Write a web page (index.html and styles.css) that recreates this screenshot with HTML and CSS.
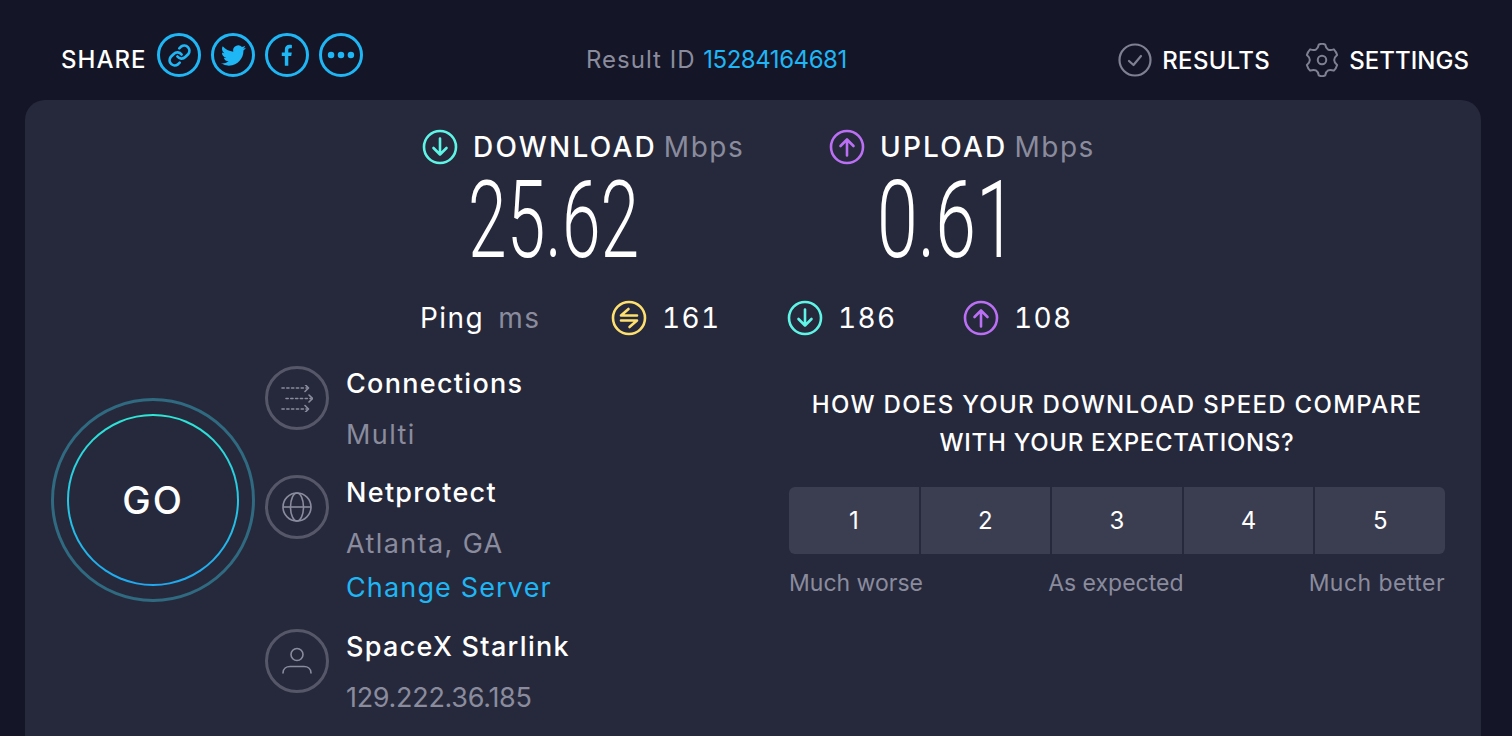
FILE: index.html
```html
<!DOCTYPE html>
<html lang="en">
<head>
  <meta charset="UTF-8">
  <meta name="viewport" content="width=device-width, initial-scale=1.0">
  <title>Speedtest Result</title>
  <link rel="stylesheet" href="styles.css">
</head>
<body>

  <header class="topbar">
    <div class="share">
      <span class="share-label">SHARE</span>
      <a class="share-btn">
        <svg viewBox="0 0 24 24" width="25" height="25" fill="none" stroke="#1fb6f5" stroke-width="2.6" stroke-linecap="round" stroke-linejoin="round"><path d="M10 13a5 5 0 0 0 7.5.5l3-3a5 5 0 0 0-7-7l-1.7 1.7"/><path d="M14 11a5 5 0 0 0-7.5-.5l-3 3a5 5 0 0 0 7 7l1.7-1.7"/></svg>
      </a>
      <a class="share-btn">
        <svg viewBox="0 0 24 24" width="25" height="25" fill="#1fb6f5"><path d="M23.953 4.57a10 10 0 01-2.825.775 4.958 4.958 0 002.163-2.723c-.951.555-2.005.959-3.127 1.184a4.92 4.92 0 00-8.384 4.482C7.69 8.095 4.067 6.13 1.64 3.162a4.822 4.822 0 00-.666 2.475c0 1.71.87 3.213 2.188 4.096a4.904 4.904 0 01-2.228-.616v.06a4.923 4.923 0 003.946 4.827 4.996 4.996 0 01-2.212.085 4.936 4.936 0 004.604 3.417 9.867 9.867 0 01-6.102 2.105c-.39 0-.779-.023-1.17-.067a13.995 13.995 0 007.557 2.209c9.053 0 13.998-7.496 13.998-13.985 0-.21 0-.42-.015-.63A9.935 9.935 0 0024 4.59z"/></svg>
      </a>
      <a class="share-btn">
        <svg viewBox="0 0 24 24" width="26" height="26" fill="#1fb6f5"><path d="M10 22v-9H7.2V9.6H10V7.2C10 4.2 11.7 2.6 14.3 2.6c.9 0 1.8.1 2.2.2v3h-1.6c-1.4 0-1.7.8-1.7 1.7v2.1h3.2l-.5 3.4h-2.7v9z"/></svg>
      </a>
      <a class="share-btn">
        <svg viewBox="0 0 24 24" width="34" height="34" fill="#1fb6f5"><circle cx="5" cy="12" r="2.3"/><circle cx="12" cy="12" r="2.3"/><circle cx="19" cy="12" r="2.3"/></svg>
      </a>
    </div>
    <div class="result-id"><span class="result-label">Result ID</span> <a class="link result-num">15284164681</a></div>
    <nav class="nav">
      <a class="nav-item">
        <svg viewBox="0 0 34 34" width="34" height="34" fill="none" stroke="#7f8193" stroke-width="2.2" stroke-linecap="round" stroke-linejoin="round"><circle cx="17" cy="17" r="15.5"/><path d="M11 18l4.5 4L23 13"/></svg>
        RESULTS
      </a>
      <a class="nav-item nav-settings">
        <svg viewBox="0 0 24 24" width="34" height="34" fill="none" stroke="#7f8193" stroke-width="1.4" stroke-linejoin="round"><circle cx="12" cy="12" r="3"/><path d="M9.7 1.2Q12 0 14.3 1.2Q15.25 6.37 20.38 4.5Q22.05 6.2 22.68 8.5Q18.5 12 22.68 15.5Q22.05 17.8 20.38 19.5Q15.25 17.63 14.3 22.8Q12 24 9.7 22.8Q8.75 17.63 3.62 19.5Q1.95 17.8 1.32 15.5Q5.5 12 1.32 8.5Q1.95 6.2 3.62 4.5Q8.75 6.37 9.7 1.2Z"/></svg>
        SETTINGS
      </a>
    </nav>
  </header>

  <main class="panel">
    <section class="speeds">
      <div class="speed speed-down">
        <div class="speed-head">
          <svg class="ico-36" viewBox="0 0 36 36" fill="none" stroke="#5ff5e6" stroke-width="2.6" stroke-linecap="round" stroke-linejoin="round"><circle cx="18" cy="18" r="16"/><path d="M18 9.5v16M11.5 19l6.5 6.5 6.5-6.5"/></svg>
          <span class="speed-name">DOWNLOAD</span> <span class="unit">Mbps</span>
        </div>
        <div class="speed-value">25.62</div>
      </div>
      <div class="speed">
        <div class="speed-head">
          <svg class="ico-36" viewBox="0 0 36 36" fill="none" stroke="#bb6ff5" stroke-width="2.6" stroke-linecap="round" stroke-linejoin="round"><circle cx="18" cy="18" r="16"/><path d="M18 26.5v-16M11.5 17l6.5-6.5 6.5 6.5"/></svg>
          <span class="speed-name">UPLOAD</span> <span class="unit">Mbps</span>
        </div>
        <div class="speed-value speed-value-up">0.61</div>
      </div>
    </section>

    <section class="ping">
      <div class="ping-label">Ping <span class="unit">ms</span></div>
      <div class="ping-stat">
        <svg class="ico-36" viewBox="0 0 36 36" fill="none" stroke="#fde06f" stroke-width="2.6" stroke-linecap="round" stroke-linejoin="round"><circle cx="18" cy="18" r="16"/><path d="M26 15.5H10l7.5-6.5M10 20.5h16l-7.5 6.5"/></svg>
        <span>161</span>
      </div>
      <div class="ping-stat">
        <svg class="ico-36" viewBox="0 0 36 36" fill="none" stroke="#5ff5e6" stroke-width="2.6" stroke-linecap="round" stroke-linejoin="round"><circle cx="18" cy="18" r="16"/><path d="M18 9.5v16M11.5 19l6.5 6.5 6.5-6.5"/></svg>
        <span>186</span>
      </div>
      <div class="ping-stat">
        <svg class="ico-36" viewBox="0 0 36 36" fill="none" stroke="#bb6ff5" stroke-width="2.6" stroke-linecap="round" stroke-linejoin="round"><circle cx="18" cy="18" r="16"/><path d="M18 26.5v-16M11.5 17l6.5-6.5 6.5 6.5"/></svg>
        <span>108</span>
      </div>
    </section>

    <section class="lower">
      <div class="go-ring">
        <div class="go-inner">GO</div>
      </div>

      <div class="info">
        <div class="info-row">
          <div class="info-ico">
            <svg viewBox="0 0 32 27" width="32" height="27" fill="none" stroke="#8a8c9e" stroke-width="1.6" stroke-linecap="round" stroke-linejoin="round"><path stroke-dasharray="2.2 2.6" d="M1 3h25M5 13.5h25M1 24h25"/><path d="M24 -.5l3.5 3.5-3.5 3.5M28 10l3.5 3.5-3.5 3.5M24 20.5l3.5 3.5-3.5 3.5"/></svg>
          </div>
          <div class="info-text">
            <div class="info-title">Connections</div>
            <div class="info-sub">Multi</div>
          </div>
        </div>
        <div class="info-row info-row-server">
          <div class="info-ico">
            <svg viewBox="0 0 30 30" width="30" height="30" fill="none" stroke="#8a8c9e" stroke-width="1.6"><circle cx="15" cy="15" r="14"/><ellipse cx="15" cy="15" rx="6.5" ry="14"/><path d="M1 15h28"/></svg>
          </div>
          <div class="info-text">
            <div class="info-title">Netprotect</div>
            <div class="info-sub">Atlanta, GA</div>
            <a class="change-server link">Change Server</a>
          </div>
        </div>
        <div class="info-row">
          <div class="info-ico">
            <svg viewBox="0 0 30 30" width="30" height="30" fill="none" stroke="#8a8c9e" stroke-width="1.6" stroke-linecap="round"><circle cx="15" cy="8.5" r="6"/><path d="M1 27c0-4.5 3.5-6.5 7-6.5h14c3.5 0 7 2 7 6.5"/></svg>
          </div>
          <div class="info-text">
            <div class="info-title">SpaceX Starlink</div>
            <div class="info-sub info-ip">129.222.36.185</div>
          </div>
        </div>
      </div>

      <div class="survey">
        <h2 class="survey-title">HOW DOES YOUR DOWNLOAD SPEED COMPARE<br><span class="survey-line">WITH YOUR EXPECTATIONS?</span></h2>
        <div class="scale">
          <button class="scale-btn">1</button>
          <button class="scale-btn">2</button>
          <button class="scale-btn">3</button>
          <button class="scale-btn">4</button>
          <button class="scale-btn">5</button>
        </div>
        <div class="scale-labels">
          <span>Much worse</span>
          <span>As expected</span>
          <span>Much better</span>
        </div>
      </div>
    </section>
  </main>

</body>
</html>
```

FILE: styles.css
```css
* {
  box-sizing: border-box;
}

html, body {
  height: 100%;
}

body {
  margin: 0;
  overflow: hidden;
  background: #141526;
  color: #fff;
  font-family: 'Inter', 'Liberation Sans', sans-serif;
}

.link {
  color: #1fb6f5;
}

.unit {
  color: #8a8c9e;
}

.ico-36 {
  width: 36px;
  height: 36px;
  flex: none;
}

/* Top bar */
.topbar {
  height: 100px;
  display: grid;
  grid-template-columns: 525px auto 1fr;
  align-items: center;
  padding: 10px 43px 0 61px;
}

.share {
  display: flex;
  align-items: center;
  gap: 10px;
}

.share-label {
  font-size: 24px;
  font-weight: 500;
  letter-spacing: 1px;
  margin: 8px 1px 0 0;
}

.share-btn {
  width: 44px;
  height: 44px;
  border: 3px solid #1fb6f5;
  border-radius: 50%;
  display: flex;
  align-items: center;
  justify-content: center;
}

.result-id {
  font-size: 24px;
  color: #8a8c9e;
  margin-top: 8px;
}

.result-label {
  letter-spacing: 1px;
  margin-right: 1px;
}

.result-num {
  letter-spacing: -.45px;
}

.nav {
  display: flex;
  justify-content: flex-end;
  gap: 35px;
  margin-top: 10px;
}

.nav-item {
  display: flex;
  align-items: center;
  gap: 10px;
  font-size: 24px;
  font-weight: 500;
  letter-spacing: .3px;
}

.nav-settings {
  letter-spacing: .05px;
}

/* Main panel */
.panel {
  margin: 0 31px 0 25px;
  height: 660px;
  background: #26293b;
  border-radius: 20px 20px 0 0;
  padding-top: 29px;
}

.speeds {
  display: flex;
  padding-left: 397px;
}

.speed-down {
  width: 407px;
}

.speed-head {
  display: flex;
  align-items: center;
  gap: 7px;
  font-size: 28px;
  font-weight: 500;
}

.speed-name {
  margin-left: 8px;
  letter-spacing: 2.2px;
}

.speed-head .unit {
  font-weight: 400;
  letter-spacing: 1.5px;
}

.speed-value {
  font-family: 'Roboto', sans-serif;
  font-size: 108px;
  font-weight: 300;
  line-height: 92px;
  margin: 9px 0 0 46px;
  transform: scaleX(.645);
  transform-origin: left center;
}

.speed-value-up {
  margin-left: 48px;
  transform: scaleX(.68);
}

/* Ping row */
.ping {
  display: flex;
  align-items: center;
  margin-top: 34px;
  padding-left: 395px;
  font-size: 28px;
}

.ping-label {
  width: 191px;
  letter-spacing: 1.4px;
}

.ping-label .unit {
  margin-left: 5px;
}

.ping-stat {
  width: 176px;
  display: flex;
  align-items: center;
  gap: 15px;
  font-variant-numeric: tabular-nums;
  letter-spacing: 1.4px;
}

/* Lower part */
.lower {
  display: flex;
  padding-left: 26px;
  margin-top: 30px;
}

.go-ring {
  width: 204px;
  height: 204px;
  flex: none;
  margin: 32px 10px 0 0;
  border: 3px solid #2f6a80;
  border-radius: 50%;
  display: flex;
  align-items: center;
  justify-content: center;
}

.go-inner {
  width: 172px;
  height: 172px;
  border: 2px solid transparent;
  border-radius: 50%;
  background: linear-gradient(#26293b, #26293b) padding-box, linear-gradient(#2ee6d6, #1fa8f0) border-box;
  display: flex;
  align-items: center;
  justify-content: center;
  font-size: 38px;
  font-weight: 500;
  letter-spacing: 2px;
}

.info {
  width: 524px;
  flex: none;
}

.info-row {
  display: flex;
  gap: 17px;
  height: 109px;
}

.info-row-server {
  height: 154px;
}

.info-ico {
  width: 64px;
  height: 64px;
  flex: none;
  border: 3px solid #565869;
  border-radius: 50%;
  display: flex;
  align-items: center;
  justify-content: center;
}

.info-title {
  font-size: 27px;
  font-weight: 500;
  line-height: 36px;
  letter-spacing: 1.3px;
}

.info-sub {
  font-size: 27px;
  color: #8a8c9e;
  line-height: 36px;
  margin-top: 15px;
  letter-spacing: 1.4px;
}

.info-ip {
  letter-spacing: -.3px;
}

.change-server {
  display: block;
  font-size: 27px;
  line-height: 36px;
  margin-top: 8px;
  letter-spacing: 1.15px;
}

/* Survey */
.survey {
  width: 656px;
  flex: none;
}

.survey-title {
  margin: 20px 0 0;
  text-align: center;
  font-size: 24px;
  font-weight: 500;
  line-height: 38px;
  letter-spacing: 1.3px;
}

.survey-line {
  letter-spacing: .7px;
}

.scale {
  display: flex;
  gap: 2px;
  margin-top: 25px;
  border-radius: 6px;
  overflow: hidden;
}

.scale-btn {
  flex: 1;
  height: 67px;
  border: 0;
  padding: 0;
  background: #3b3e51;
  color: #fff;
  font-family: inherit;
  font-size: 24px;
}

.scale-labels {
  display: flex;
  justify-content: space-between;
  margin-top: 15px;
  font-size: 23px;
  color: #8a8c9e;
}

.scale-labels span:last-child {
  letter-spacing: .45px;
}
```
